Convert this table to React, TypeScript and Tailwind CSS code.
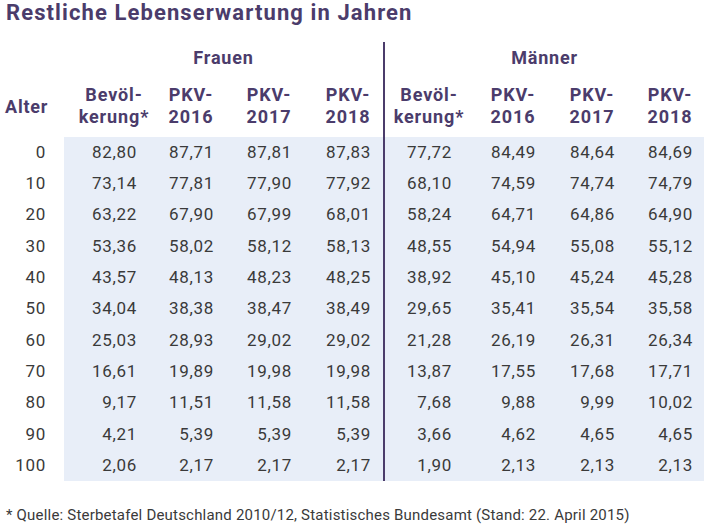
import React from "react";

const rows: [number, string[]][] = [
  [0, ["82,80", "87,71", "87,81", "87,83", "77,72", "84,49", "84,64", "84,69"]],
  [10, ["73,14", "77,81", "77,90", "77,92", "68,10", "74,59", "74,74", "74,79"]],
  [20, ["63,22", "67,90", "67,99", "68,01", "58,24", "64,71", "64,86", "64,90"]],
  [30, ["53,36", "58,02", "58,12", "58,13", "48,55", "54,94", "55,08", "55,12"]],
  [40, ["43,57", "48,13", "48,23", "48,25", "38,92", "45,10", "45,24", "45,28"]],
  [50, ["34,04", "38,38", "38,47", "38,49", "29,65", "35,41", "35,54", "35,58"]],
  [60, ["25,03", "28,93", "29,02", "29,02", "21,28", "26,19", "26,31", "26,34"]],
  [70, ["16,61", "19,89", "19,98", "19,98", "13,87", "17,55", "17,68", "17,71"]],
  [80, ["9,17", "11,51", "11,58", "11,58", "7,68", "9,88", "9,99", "10,02"]],
  [90, ["4,21", "5,39", "5,39", "5,39", "3,66", "4,62", "4,65", "4,65"]],
  [100, ["2,06", "2,17", "2,17", "2,17", "1,90", "2,13", "2,13", "2,13"]],
];

const frauenCols = [
  { w: "w-[83px]", pr: "pr-[10px]" },
  { w: "w-[77px]", pr: "pr-[10px]" },
  { w: "w-[78px]", pr: "pr-[10px]" },
  { w: "w-[81px]", pr: "pr-[12px]" },
];
const maennerCols = [
  { w: "w-[77px]", pr: "pr-[10px]" },
  { w: "w-[84px]", pr: "pr-[10px]" },
  { w: "w-[79px]", pr: "pr-[10px]" },
  { w: "w-[79px]", pr: "pr-[11px]" },
];

const headers: [string, string][] = [
  ["Bevöl-", "kerung*"],
  ["PKV-", "2016"],
  ["PKV-", "2017"],
  ["PKV-", "2018"],
];

function Section({
  title,
  cols,
  offset,
  border,
}: {
  title: string;
  cols: { w: string; pr: string }[];
  offset: number;
  border: boolean;
}) {
  return (
    <div className={border ? "flex flex-col border-l-2 border-[#4b3c6b]" : "flex flex-col"}>
      <div className="h-[30px] flex items-center justify-center text-[18px] font-bold tracking-[0.8px] text-[#4b3c6b]">
        {title}
      </div>
      <div className="h-[65px] pt-[12px] flex">
        {cols.map((c, i) => (
          <div key={i} className={`${c.w} ${c.pr} flex justify-end shrink-0`}>
            <div className="w-[46px] flex flex-col items-center text-[18px] leading-[22px] font-bold tracking-[0.9px] text-[#4b3c6b] whitespace-nowrap">
              <span>{headers[i][0]}</span>
              <span>{headers[i][1]}</span>
            </div>
          </div>
        ))}
      </div>
      <div className="bg-[#e8eef8] flex flex-col">
        {rows.map(([age, vals]) => (
          <div key={age} className="h-[31.3px] flex items-center">
            {cols.map((c, i) => (
              <div
                key={i}
                className={`${c.w} ${c.pr} shrink-0 text-right text-[17px] tracking-[0.7px] text-[#3a3a3a]`}
              >
                {vals[offset + i]}
              </div>
            ))}
          </div>
        ))}
      </div>
    </div>
  );
}

export default function App() {
  return (
    <div className="w-[710px] h-[527px] bg-white font-['Roboto',sans-serif] flex flex-col">
      <h1 className="pl-[6px] h-[42px] pt-[0px] text-[22px] leading-[26px] font-bold tracking-[1.1px] text-[#4b3c6b]">
        Restliche Lebenserwartung in Jahren
      </h1>
      <div className="flex">
        <div className="w-[64px] shrink-0 flex flex-col">
          <div className="h-[30px]" />
          <div className="h-[65px] flex items-center pt-[3px] pl-[5px] text-[18px] font-bold tracking-[0.8px] text-[#4b3c6b]">
            Alter
          </div>
          <div className="flex flex-col">
            {rows.map(([age]) => (
              <div
                key={age}
                className="h-[31.3px] flex items-center justify-end pr-[18px] text-[17px] tracking-[0.7px] text-[#3a3a3a]"
              >
                {age}
              </div>
            ))}
          </div>
        </div>
        <Section title="Frauen" cols={frauenCols} offset={0} border={false} />
        <Section title="Männer" cols={maennerCols} offset={4} border={true} />
      </div>
      <div className="pl-[6px] pt-[23px] text-[15px] tracking-[0.2px] text-[#3a3a3a]">
        * Quelle: Sterbetafel Deutschland 2010/12, Statistisches Bundesamt (Stand: 22. April 2015)
      </div>
    </div>
  );
}
